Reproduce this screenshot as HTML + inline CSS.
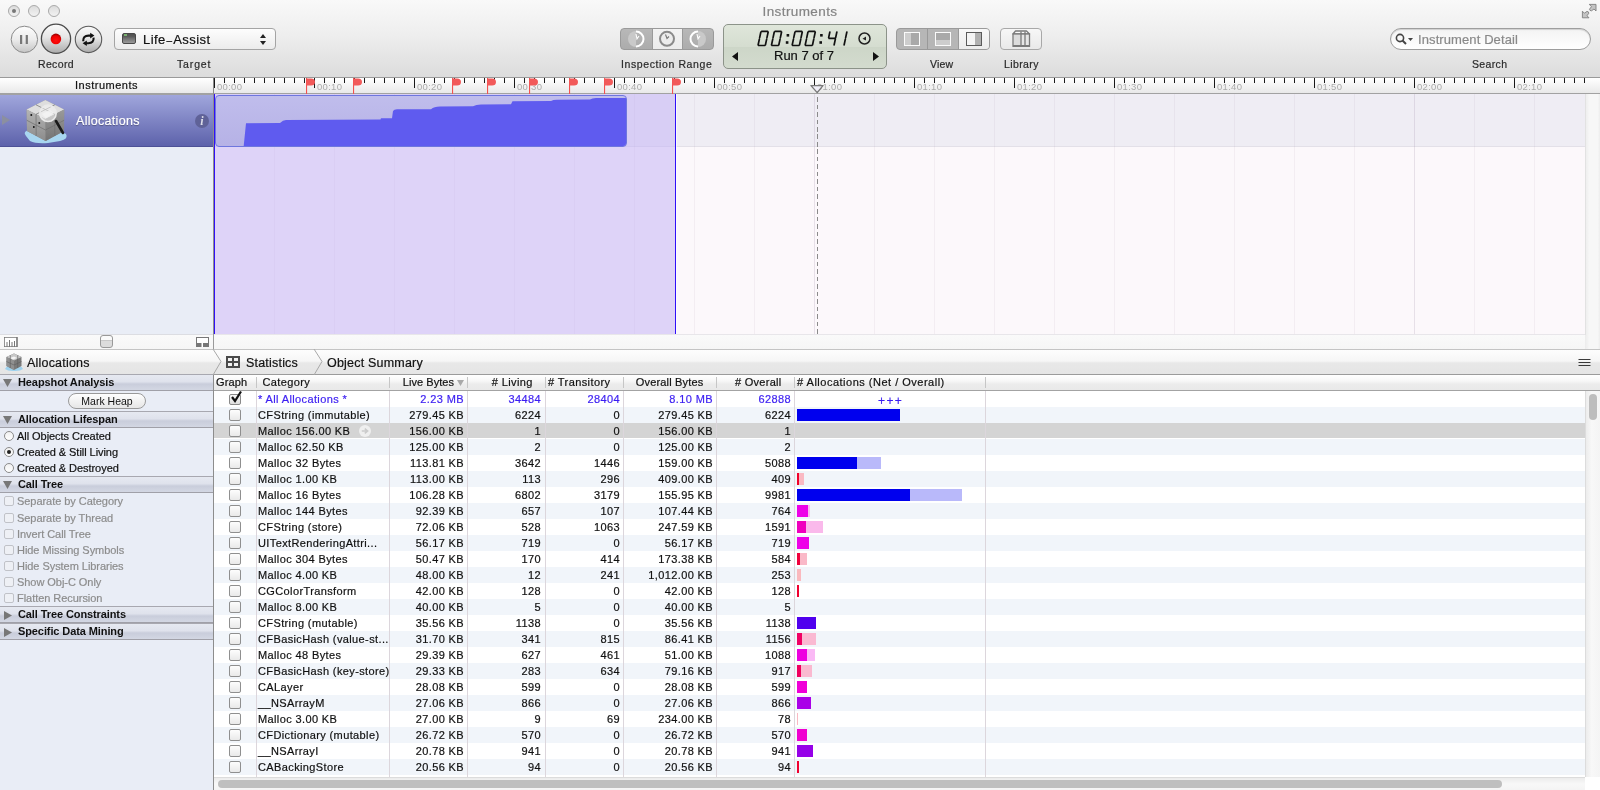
<!DOCTYPE html><html><head><meta charset="utf-8"><style>

*{box-sizing:border-box}
html,body{margin:0;padding:0}
body{width:1600px;height:790px;overflow:hidden;position:relative;font-family:"Liberation Sans",sans-serif;background:#e9edf6;color:#000}
.abs{position:absolute}
.lbl{position:absolute;font-size:10.5px;color:#2a2a2a;letter-spacing:0.35px;white-space:nowrap;line-height:12px;margin-top:1px;-webkit-text-stroke:0.2px currentColor}
.t{position:absolute;white-space:nowrap;-webkit-text-stroke:0.2px currentColor}

</style></head><body><div id="root" style="position:absolute;left:0;top:0;width:1600px;height:790px;overflow:hidden;will-change:transform">
<div class="abs" style="left:0;top:0;width:1600px;height:78px;background:linear-gradient(#f9f9f9 0%,#eeeeee 45%,#dcdcdc 100%);border-bottom:1px solid #9a9a9a"></div>
<div class="t" style="left:0;width:1600px;top:4px;text-align:center;font-size:13.5px;color:#858585;letter-spacing:0.4px">Instruments</div>
<div class="abs" style="left:8px;top:5px;width:12px;height:12px;border-radius:50%;border:1px solid #a9a9a9;background:linear-gradient(#dcdcdc,#f2f2f2)"></div>
<div class="abs" style="left:28px;top:5px;width:12px;height:12px;border-radius:50%;border:1px solid #a9a9a9;background:linear-gradient(#dcdcdc,#f2f2f2)"></div>
<div class="abs" style="left:48px;top:5px;width:12px;height:12px;border-radius:50%;border:1px solid #a9a9a9;background:linear-gradient(#dcdcdc,#f2f2f2)"></div>
<div class="abs" style="left:12px;top:9px;width:4px;height:4px;border-radius:50%;background:#777"></div>
<svg class="abs" style="left:0;top:20px" width="110" height="40" viewBox="0 20 110 40">
<defs>
<linearGradient id="bg1" x1="0" y1="0" x2="0" y2="1"><stop offset="0" stop-color="#fdfdfd"/><stop offset="0.5" stop-color="#ececec"/><stop offset="1" stop-color="#c4c4c4"/></linearGradient>
<linearGradient id="bg2" x1="0" y1="0" x2="0" y2="1"><stop offset="0" stop-color="#fafafa"/><stop offset="0.45" stop-color="#e6e6e6"/><stop offset="1" stop-color="#aaaaaa"/></linearGradient>
<radialGradient id="rd" cx="0.5" cy="0.65" r="0.6"><stop offset="0" stop-color="#ff1010"/><stop offset="0.7" stop-color="#f00000"/><stop offset="1" stop-color="#a00000"/></radialGradient>
</defs>
<circle cx="24.4" cy="39.4" r="13.2" fill="url(#bg1)" stroke="#8a8a8a" stroke-width="1"/>
<rect x="20" y="35" width="2.2" height="9" fill="#777"/><rect x="25.7" y="35" width="2.2" height="9" fill="#777"/>
<circle cx="56" cy="38.8" r="14.6" fill="url(#bg2)" stroke="#4a4a4a" stroke-width="1.3"/>
<circle cx="55.9" cy="38.9" r="5.3" fill="url(#rd)"/>
<circle cx="88.5" cy="39.4" r="13.2" fill="url(#bg2)" stroke="#5a5a5a" stroke-width="1.1"/>
<path d="M83.2 41.2 Q83 35.8 88.6 35.6 L91 35.6" fill="none" stroke="#111" stroke-width="2.1"/>
<path d="M90.2 32.8 L94.4 35.6 L90.2 38.4 Z" fill="#111"/>
<path d="M93.6 37.6 Q94 43 88.4 43.2 L86 43.2" fill="none" stroke="#111" stroke-width="2.1"/>
<path d="M86.8 40.4 L82.6 43.2 L86.8 46 Z" fill="#111"/>
</svg>
<div class="lbl" style="left:38px;top:57px">Record</div>
<div class="abs" style="left:114px;top:28px;width:162px;height:22px;border-radius:4px;border:1px solid #a4a4a4;background:linear-gradient(#fdfdfd,#ececec)"></div>
<div class="abs" style="left:122px;top:33px;width:14px;height:11px;border-radius:2px;border:1px solid #4a4a4a;background:linear-gradient(#505050 0,#5c5c5c 30%,#4e4e4e 32%,#6a6a6a 40%,#9a9a9a 100%)"></div>
<div class="abs" style="left:124px;top:34px;width:3px;height:2px;background:#7ab070"></div>
<div class="t" style="left:143px;top:32px;font-size:13px;letter-spacing:0.45px;color:#111">Life<span style="font-size:10px;margin-left:0.8px;margin-right:0.6px">–</span>Assist</div>
<svg class="abs" style="left:259px;top:33px" width="8" height="13" viewBox="0 0 8 13"><path d="M4 1 L7 5 L1 5 Z M4 12 L7 8 L1 8 Z" fill="#222"/></svg>
<div class="lbl" style="left:177px;top:57px;letter-spacing:0.85px">Target</div>
<div class="abs" style="left:620px;top:28px;width:94px;height:22px;border-radius:4px;border:1px solid #9a9a9a;background:linear-gradient(#b8b8b8,#acacac);overflow:hidden"><div class="abs" style="left:31px;top:0;width:31px;height:20px;background:linear-gradient(#f2f2f2,#ececec);border-left:1px solid #9a9a9a;border-right:1px solid #9a9a9a"></div></div>
<svg class="abs" style="left:620px;top:28px" width="94" height="22" viewBox="620 28 94 22">
<path d="M636 31 A8 8 0 0 0 636 47 Z" fill="#c9c9c9"/>
<path d="M636 31.5 A7.5 7.5 0 0 1 636 46.5" fill="none" stroke="#fff" stroke-width="2"/>
<path d="M636 34 L637 38.8 L639 36" fill="none" stroke="#fff" stroke-width="1.1"/>
<circle cx="667" cy="38.8" r="7" fill="#ececec" stroke="#8a8a8a" stroke-width="2"/>
<path d="M665.5 34.5 L667 38.5 L669 36.5" fill="none" stroke="#777" stroke-width="1.1"/>
<path d="M698 31 A8 8 0 0 1 698 47 Z" fill="#c9c9c9"/>
<path d="M698 31.5 A7.5 7.5 0 0 0 698 46.5" fill="none" stroke="#fff" stroke-width="2"/>
<path d="M697 34 L698 38.8 L700 36" fill="none" stroke="#fff" stroke-width="1.1"/>
</svg>
<div class="lbl" style="left:621px;top:57px;letter-spacing:0.6px">Inspection Range</div>
<div class="abs" style="left:723px;top:24px;width:164px;height:45px;border-radius:5px;border:1px solid #8c9389;background:linear-gradient(#dfe6da 0,#d5ddd0 50%,#cdd6c8 51%,#d3dbce 100%)"></div>
<svg class="abs" style="left:0;top:0" width="900" height="60" viewBox="0 0 900 60"><path d="M761.70 31.30 L767.60 31.30 M768.15 32.00 L766.96 37.70 M766.66 39.10 L765.46 44.80 M758.72 45.50 L764.62 45.50 M759.36 39.10 L758.16 44.80 M760.85 32.00 L759.66 37.70 M775.10 31.30 L781.00 31.30 M781.55 32.00 L780.36 37.70 M780.06 39.10 L778.86 44.80 M772.12 45.50 L778.02 45.50 M772.76 39.10 L771.56 44.80 M774.25 32.00 L773.06 37.70 M795.80 31.30 L801.70 31.30 M802.25 32.00 L801.06 37.70 M800.76 39.10 L799.56 44.80 M792.82 45.50 L798.72 45.50 M793.46 39.10 L792.26 44.80 M794.95 32.00 L793.76 37.70 M808.80 31.30 L814.70 31.30 M815.25 32.00 L814.06 37.70 M813.76 39.10 L812.56 44.80 M805.82 45.50 L811.72 45.50 M806.46 39.10 L805.26 44.80 M807.95 32.00 L806.76 37.70 M829.85 32.00 L828.66 37.70 M829.21 38.40 L834.81 38.40 M836.85 32.00 L835.66 37.70 M835.36 39.10 L834.16 44.80 M846.85 32.00 L845.66 37.70 M845.36 39.10 L844.16 44.80" stroke="#111" stroke-width="1.7" fill="none" stroke-linecap="round"/><rect x="786.6" y="34" width="2.6" height="2.6" fill="#111"/><rect x="785.8" y="41.2" width="2.6" height="2.6" fill="#111"/><rect x="820.1" y="34" width="2.6" height="2.6" fill="#111"/><rect x="819.4" y="41.2" width="2.6" height="2.6" fill="#111"/></svg>
<svg class="abs" style="left:857px;top:31px" width="15" height="15" viewBox="0 0 15 15"><circle cx="7.5" cy="7.5" r="5.5" fill="none" stroke="#222" stroke-width="1.5"/><path d="M9 5.5 L5.5 7.7 L9 9.5 Z" fill="#222"/></svg>
<div class="t" style="left:774px;top:48px;font-size:13px;color:#111">Run 7 of 7</div>
<svg class="abs" style="left:732px;top:52px" width="7" height="9"><path d="M6 0 L0 4.5 L6 9 Z" fill="#111"/></svg>
<svg class="abs" style="left:873px;top:52px" width="7" height="9"><path d="M0 0 L6 4.5 L0 9 Z" fill="#111"/></svg>
<div class="abs" style="left:896px;top:28px;width:94px;height:22px;border-radius:4px;border:1px solid #9a9a9a;background:#b6b6b6;overflow:hidden"><div class="abs" style="left:30px;top:0;width:1px;height:20px;background:#999"></div><div class="abs" style="left:61px;top:0;width:32px;height:20px;background:linear-gradient(#f8f8f8,#ececec);border-left:1px solid #9a9a9a"></div></div>
<div class="abs" style="left:904px;top:32px;width:16px;height:14px;border:1.5px solid #fafafa;background:linear-gradient(90deg,#cdcdcd 40%,#a9a9a9 40%)"></div>
<div class="abs" style="left:935px;top:32px;width:16px;height:14px;border:1.5px solid #fafafa;background:linear-gradient(#a9a9a9 60%,#cdcdcd 60%)"></div>
<div class="abs" style="left:966px;top:32px;width:16px;height:14px;border:1.5px solid #5a5a5a;background:linear-gradient(90deg,#f4f4f4 60%,#b0b0b0 60%)"></div>
<div class="lbl" style="left:930px;top:57px;letter-spacing:0.2px">View</div>
<div class="abs" style="left:1000px;top:28px;width:42px;height:22px;border-radius:4px;border:1px solid #a8a8a8;background:linear-gradient(#f7f7f7,#e9e9e9)"></div>
<svg class="abs" style="left:1008px;top:28px" width="26" height="22" viewBox="1008 28 26 22"><path d="M1013 34 L1015.5 31 L1026.5 31 L1029.5 34 Z" fill="#fafafa" stroke="#7a7a7a" stroke-width="1.3" stroke-linejoin="round"/><rect x="1013" y="34" width="16.5" height="12.3" fill="#e6e6e6" stroke="#7a7a7a" stroke-width="1.3"/><rect x="1014" y="35" width="7" height="10.5" fill="#dcdcdc"/><path d="M1021 31.5 L1021 46.3 M1025 31.5 L1025 46.3" stroke="#7a7a7a" stroke-width="1.3"/><rect x="1013" y="45" width="16.5" height="1.6" fill="#7a7a7a"/></svg>
<div class="lbl" style="left:1004px;top:57px;letter-spacing:0.4px">Library</div>
<div class="abs" style="left:1390px;top:28px;width:201px;height:22px;border-radius:11px;border:1px solid #9d9d9d;background:linear-gradient(#f3f3f3,#ffffff);box-shadow:inset 0 1px 1px rgba(0,0,0,.15)"></div>
<svg class="abs" style="left:1395px;top:33px" width="20" height="13" viewBox="0 0 20 13"><circle cx="5" cy="5" r="3.6" fill="none" stroke="#444" stroke-width="1.6"/><path d="M7.5 7.5 L11 11" stroke="#444" stroke-width="2"/><path d="M13 5 L18 5 L15.5 8 Z" fill="#444"/></svg>
<div class="t" style="left:1418px;top:32px;font-size:13px;color:#8a8a8a;letter-spacing:0.1px">Instrument Detail</div>
<div class="lbl" style="left:1472px;top:57px">Search</div>
<svg class="abs" style="left:1576px;top:0" width="24" height="24" viewBox="1576 0 24 24"><path d="M1589.2 4.4 L1596 4.4 L1596 11 L1594 9 L1591.5 10.8 Q1589.5 10.8 1589.5 9.2 L1591.5 6.6 Z" fill="#c4c4c4" stroke="#808080" stroke-width="0.9" stroke-linejoin="round"/><path d="M1582.4 11.2 L1582.4 17.8 L1589 17.8 L1587 15.8 L1588.8 13.2 Q1588.8 11.4 1587 11.4 L1584.4 13.2 Z" fill="#c4c4c4" stroke="#808080" stroke-width="0.9" stroke-linejoin="round"/></svg>
<div class="abs" style="left:0;top:78px;width:1600px;height:17px;background:linear-gradient(#ffffff 0,#f6f6f6 40%,#e9e9e9 100%);border-bottom:2px solid #a2a2a2"></div>
<div class="t" style="left:0;width:213px;top:79px;text-align:center;font-size:11px;letter-spacing:0.5px;color:#111">Instruments</div>
<div class="abs" style="left:213px;top:78px;width:1px;height:16px;background:#8a8a8a"></div>
<div class="abs" style="left:214px;top:78px;width:1px;height:10px;background:#1a1a1a"></div><div class="abs" style="left:224px;top:78px;width:1px;height:5px;background:#1a1a1a"></div><div class="abs" style="left:234px;top:78px;width:1px;height:5px;background:#1a1a1a"></div><div class="abs" style="left:244px;top:78px;width:1px;height:5px;background:#1a1a1a"></div><div class="abs" style="left:254px;top:78px;width:1px;height:5px;background:#1a1a1a"></div><div class="abs" style="left:264px;top:78px;width:1px;height:5px;background:#1a1a1a"></div><div class="abs" style="left:274px;top:78px;width:1px;height:5px;background:#1a1a1a"></div><div class="abs" style="left:284px;top:78px;width:1px;height:5px;background:#1a1a1a"></div><div class="abs" style="left:294px;top:78px;width:1px;height:5px;background:#1a1a1a"></div><div class="abs" style="left:304px;top:78px;width:1px;height:5px;background:#1a1a1a"></div><div class="abs" style="left:314px;top:78px;width:1px;height:10px;background:#1a1a1a"></div><div class="abs" style="left:324px;top:78px;width:1px;height:5px;background:#1a1a1a"></div><div class="abs" style="left:334px;top:78px;width:1px;height:5px;background:#1a1a1a"></div><div class="abs" style="left:344px;top:78px;width:1px;height:5px;background:#1a1a1a"></div><div class="abs" style="left:354px;top:78px;width:1px;height:5px;background:#1a1a1a"></div><div class="abs" style="left:364px;top:78px;width:1px;height:5px;background:#1a1a1a"></div><div class="abs" style="left:374px;top:78px;width:1px;height:5px;background:#1a1a1a"></div><div class="abs" style="left:384px;top:78px;width:1px;height:5px;background:#1a1a1a"></div><div class="abs" style="left:394px;top:78px;width:1px;height:5px;background:#1a1a1a"></div><div class="abs" style="left:404px;top:78px;width:1px;height:5px;background:#1a1a1a"></div><div class="abs" style="left:414px;top:78px;width:1px;height:10px;background:#1a1a1a"></div><div class="abs" style="left:424px;top:78px;width:1px;height:5px;background:#1a1a1a"></div><div class="abs" style="left:434px;top:78px;width:1px;height:5px;background:#1a1a1a"></div><div class="abs" style="left:444px;top:78px;width:1px;height:5px;background:#1a1a1a"></div><div class="abs" style="left:454px;top:78px;width:1px;height:5px;background:#1a1a1a"></div><div class="abs" style="left:464px;top:78px;width:1px;height:5px;background:#1a1a1a"></div><div class="abs" style="left:474px;top:78px;width:1px;height:5px;background:#1a1a1a"></div><div class="abs" style="left:484px;top:78px;width:1px;height:5px;background:#1a1a1a"></div><div class="abs" style="left:494px;top:78px;width:1px;height:5px;background:#1a1a1a"></div><div class="abs" style="left:504px;top:78px;width:1px;height:5px;background:#1a1a1a"></div><div class="abs" style="left:514px;top:78px;width:1px;height:10px;background:#1a1a1a"></div><div class="abs" style="left:524px;top:78px;width:1px;height:5px;background:#1a1a1a"></div><div class="abs" style="left:534px;top:78px;width:1px;height:5px;background:#1a1a1a"></div><div class="abs" style="left:544px;top:78px;width:1px;height:5px;background:#1a1a1a"></div><div class="abs" style="left:554px;top:78px;width:1px;height:5px;background:#1a1a1a"></div><div class="abs" style="left:564px;top:78px;width:1px;height:5px;background:#1a1a1a"></div><div class="abs" style="left:574px;top:78px;width:1px;height:5px;background:#1a1a1a"></div><div class="abs" style="left:584px;top:78px;width:1px;height:5px;background:#1a1a1a"></div><div class="abs" style="left:594px;top:78px;width:1px;height:5px;background:#1a1a1a"></div><div class="abs" style="left:604px;top:78px;width:1px;height:5px;background:#1a1a1a"></div><div class="abs" style="left:614px;top:78px;width:1px;height:10px;background:#1a1a1a"></div><div class="abs" style="left:624px;top:78px;width:1px;height:5px;background:#1a1a1a"></div><div class="abs" style="left:634px;top:78px;width:1px;height:5px;background:#1a1a1a"></div><div class="abs" style="left:644px;top:78px;width:1px;height:5px;background:#1a1a1a"></div><div class="abs" style="left:654px;top:78px;width:1px;height:5px;background:#1a1a1a"></div><div class="abs" style="left:664px;top:78px;width:1px;height:5px;background:#1a1a1a"></div><div class="abs" style="left:674px;top:78px;width:1px;height:5px;background:#1a1a1a"></div><div class="abs" style="left:684px;top:78px;width:1px;height:5px;background:#1a1a1a"></div><div class="abs" style="left:694px;top:78px;width:1px;height:5px;background:#1a1a1a"></div><div class="abs" style="left:704px;top:78px;width:1px;height:5px;background:#1a1a1a"></div><div class="abs" style="left:714px;top:78px;width:1px;height:10px;background:#1a1a1a"></div><div class="abs" style="left:724px;top:78px;width:1px;height:5px;background:#1a1a1a"></div><div class="abs" style="left:734px;top:78px;width:1px;height:5px;background:#1a1a1a"></div><div class="abs" style="left:744px;top:78px;width:1px;height:5px;background:#1a1a1a"></div><div class="abs" style="left:754px;top:78px;width:1px;height:5px;background:#1a1a1a"></div><div class="abs" style="left:764px;top:78px;width:1px;height:5px;background:#1a1a1a"></div><div class="abs" style="left:774px;top:78px;width:1px;height:5px;background:#1a1a1a"></div><div class="abs" style="left:784px;top:78px;width:1px;height:5px;background:#1a1a1a"></div><div class="abs" style="left:794px;top:78px;width:1px;height:5px;background:#1a1a1a"></div><div class="abs" style="left:804px;top:78px;width:1px;height:5px;background:#1a1a1a"></div><div class="abs" style="left:814px;top:78px;width:1px;height:10px;background:#1a1a1a"></div><div class="abs" style="left:824px;top:78px;width:1px;height:5px;background:#1a1a1a"></div><div class="abs" style="left:834px;top:78px;width:1px;height:5px;background:#1a1a1a"></div><div class="abs" style="left:844px;top:78px;width:1px;height:5px;background:#1a1a1a"></div><div class="abs" style="left:854px;top:78px;width:1px;height:5px;background:#1a1a1a"></div><div class="abs" style="left:864px;top:78px;width:1px;height:5px;background:#1a1a1a"></div><div class="abs" style="left:874px;top:78px;width:1px;height:5px;background:#1a1a1a"></div><div class="abs" style="left:884px;top:78px;width:1px;height:5px;background:#1a1a1a"></div><div class="abs" style="left:894px;top:78px;width:1px;height:5px;background:#1a1a1a"></div><div class="abs" style="left:904px;top:78px;width:1px;height:5px;background:#1a1a1a"></div><div class="abs" style="left:914px;top:78px;width:1px;height:10px;background:#1a1a1a"></div><div class="abs" style="left:924px;top:78px;width:1px;height:5px;background:#1a1a1a"></div><div class="abs" style="left:934px;top:78px;width:1px;height:5px;background:#1a1a1a"></div><div class="abs" style="left:944px;top:78px;width:1px;height:5px;background:#1a1a1a"></div><div class="abs" style="left:954px;top:78px;width:1px;height:5px;background:#1a1a1a"></div><div class="abs" style="left:964px;top:78px;width:1px;height:5px;background:#1a1a1a"></div><div class="abs" style="left:974px;top:78px;width:1px;height:5px;background:#1a1a1a"></div><div class="abs" style="left:984px;top:78px;width:1px;height:5px;background:#1a1a1a"></div><div class="abs" style="left:994px;top:78px;width:1px;height:5px;background:#1a1a1a"></div><div class="abs" style="left:1004px;top:78px;width:1px;height:5px;background:#1a1a1a"></div><div class="abs" style="left:1014px;top:78px;width:1px;height:10px;background:#1a1a1a"></div><div class="abs" style="left:1024px;top:78px;width:1px;height:5px;background:#1a1a1a"></div><div class="abs" style="left:1034px;top:78px;width:1px;height:5px;background:#1a1a1a"></div><div class="abs" style="left:1044px;top:78px;width:1px;height:5px;background:#1a1a1a"></div><div class="abs" style="left:1054px;top:78px;width:1px;height:5px;background:#1a1a1a"></div><div class="abs" style="left:1064px;top:78px;width:1px;height:5px;background:#1a1a1a"></div><div class="abs" style="left:1074px;top:78px;width:1px;height:5px;background:#1a1a1a"></div><div class="abs" style="left:1084px;top:78px;width:1px;height:5px;background:#1a1a1a"></div><div class="abs" style="left:1094px;top:78px;width:1px;height:5px;background:#1a1a1a"></div><div class="abs" style="left:1104px;top:78px;width:1px;height:5px;background:#1a1a1a"></div><div class="abs" style="left:1114px;top:78px;width:1px;height:10px;background:#1a1a1a"></div><div class="abs" style="left:1124px;top:78px;width:1px;height:5px;background:#1a1a1a"></div><div class="abs" style="left:1134px;top:78px;width:1px;height:5px;background:#1a1a1a"></div><div class="abs" style="left:1144px;top:78px;width:1px;height:5px;background:#1a1a1a"></div><div class="abs" style="left:1154px;top:78px;width:1px;height:5px;background:#1a1a1a"></div><div class="abs" style="left:1164px;top:78px;width:1px;height:5px;background:#1a1a1a"></div><div class="abs" style="left:1174px;top:78px;width:1px;height:5px;background:#1a1a1a"></div><div class="abs" style="left:1184px;top:78px;width:1px;height:5px;background:#1a1a1a"></div><div class="abs" style="left:1194px;top:78px;width:1px;height:5px;background:#1a1a1a"></div><div class="abs" style="left:1204px;top:78px;width:1px;height:5px;background:#1a1a1a"></div><div class="abs" style="left:1214px;top:78px;width:1px;height:10px;background:#1a1a1a"></div><div class="abs" style="left:1224px;top:78px;width:1px;height:5px;background:#1a1a1a"></div><div class="abs" style="left:1234px;top:78px;width:1px;height:5px;background:#1a1a1a"></div><div class="abs" style="left:1244px;top:78px;width:1px;height:5px;background:#1a1a1a"></div><div class="abs" style="left:1254px;top:78px;width:1px;height:5px;background:#1a1a1a"></div><div class="abs" style="left:1264px;top:78px;width:1px;height:5px;background:#1a1a1a"></div><div class="abs" style="left:1274px;top:78px;width:1px;height:5px;background:#1a1a1a"></div><div class="abs" style="left:1284px;top:78px;width:1px;height:5px;background:#1a1a1a"></div><div class="abs" style="left:1294px;top:78px;width:1px;height:5px;background:#1a1a1a"></div><div class="abs" style="left:1304px;top:78px;width:1px;height:5px;background:#1a1a1a"></div><div class="abs" style="left:1314px;top:78px;width:1px;height:10px;background:#1a1a1a"></div><div class="abs" style="left:1324px;top:78px;width:1px;height:5px;background:#1a1a1a"></div><div class="abs" style="left:1334px;top:78px;width:1px;height:5px;background:#1a1a1a"></div><div class="abs" style="left:1344px;top:78px;width:1px;height:5px;background:#1a1a1a"></div><div class="abs" style="left:1354px;top:78px;width:1px;height:5px;background:#1a1a1a"></div><div class="abs" style="left:1364px;top:78px;width:1px;height:5px;background:#1a1a1a"></div><div class="abs" style="left:1374px;top:78px;width:1px;height:5px;background:#1a1a1a"></div><div class="abs" style="left:1384px;top:78px;width:1px;height:5px;background:#1a1a1a"></div><div class="abs" style="left:1394px;top:78px;width:1px;height:5px;background:#1a1a1a"></div><div class="abs" style="left:1404px;top:78px;width:1px;height:5px;background:#1a1a1a"></div><div class="abs" style="left:1414px;top:78px;width:1px;height:10px;background:#1a1a1a"></div><div class="abs" style="left:1424px;top:78px;width:1px;height:5px;background:#1a1a1a"></div><div class="abs" style="left:1434px;top:78px;width:1px;height:5px;background:#1a1a1a"></div><div class="abs" style="left:1444px;top:78px;width:1px;height:5px;background:#1a1a1a"></div><div class="abs" style="left:1454px;top:78px;width:1px;height:5px;background:#1a1a1a"></div><div class="abs" style="left:1464px;top:78px;width:1px;height:5px;background:#1a1a1a"></div><div class="abs" style="left:1474px;top:78px;width:1px;height:5px;background:#1a1a1a"></div><div class="abs" style="left:1484px;top:78px;width:1px;height:5px;background:#1a1a1a"></div><div class="abs" style="left:1494px;top:78px;width:1px;height:5px;background:#1a1a1a"></div><div class="abs" style="left:1504px;top:78px;width:1px;height:5px;background:#1a1a1a"></div><div class="abs" style="left:1514px;top:78px;width:1px;height:10px;background:#1a1a1a"></div><div class="abs" style="left:1524px;top:78px;width:1px;height:5px;background:#1a1a1a"></div><div class="abs" style="left:1534px;top:78px;width:1px;height:5px;background:#1a1a1a"></div><div class="abs" style="left:1544px;top:78px;width:1px;height:5px;background:#1a1a1a"></div><div class="abs" style="left:1554px;top:78px;width:1px;height:5px;background:#1a1a1a"></div><div class="abs" style="left:1564px;top:78px;width:1px;height:5px;background:#1a1a1a"></div><div class="abs" style="left:1574px;top:78px;width:1px;height:5px;background:#1a1a1a"></div><div class="abs" style="left:1584px;top:78px;width:1px;height:5px;background:#1a1a1a"></div>
<div class="t" style="left:217px;top:82px;font-size:9.5px;letter-spacing:0.3px;color:#acacac;line-height:10px;-webkit-text-stroke:0">00:00</div>
<div class="t" style="left:317px;top:82px;font-size:9.5px;letter-spacing:0.3px;color:#acacac;line-height:10px;-webkit-text-stroke:0">00:10</div>
<div class="t" style="left:417px;top:82px;font-size:9.5px;letter-spacing:0.3px;color:#acacac;line-height:10px;-webkit-text-stroke:0">00:20</div>
<div class="t" style="left:517px;top:82px;font-size:9.5px;letter-spacing:0.3px;color:#acacac;line-height:10px;-webkit-text-stroke:0">00:30</div>
<div class="t" style="left:617px;top:82px;font-size:9.5px;letter-spacing:0.3px;color:#acacac;line-height:10px;-webkit-text-stroke:0">00:40</div>
<div class="t" style="left:717px;top:82px;font-size:9.5px;letter-spacing:0.3px;color:#acacac;line-height:10px;-webkit-text-stroke:0">00:50</div>
<div class="t" style="left:817px;top:82px;font-size:9.5px;letter-spacing:0.3px;color:#acacac;line-height:10px;-webkit-text-stroke:0">01:00</div>
<div class="t" style="left:917px;top:82px;font-size:9.5px;letter-spacing:0.3px;color:#acacac;line-height:10px;-webkit-text-stroke:0">01:10</div>
<div class="t" style="left:1017px;top:82px;font-size:9.5px;letter-spacing:0.3px;color:#acacac;line-height:10px;-webkit-text-stroke:0">01:20</div>
<div class="t" style="left:1117px;top:82px;font-size:9.5px;letter-spacing:0.3px;color:#acacac;line-height:10px;-webkit-text-stroke:0">01:30</div>
<div class="t" style="left:1217px;top:82px;font-size:9.5px;letter-spacing:0.3px;color:#acacac;line-height:10px;-webkit-text-stroke:0">01:40</div>
<div class="t" style="left:1317px;top:82px;font-size:9.5px;letter-spacing:0.3px;color:#acacac;line-height:10px;-webkit-text-stroke:0">01:50</div>
<div class="t" style="left:1417px;top:82px;font-size:9.5px;letter-spacing:0.3px;color:#acacac;line-height:10px;-webkit-text-stroke:0">02:00</div>
<div class="t" style="left:1517px;top:82px;font-size:9.5px;letter-spacing:0.3px;color:#acacac;line-height:10px;-webkit-text-stroke:0">02:10</div>
<div class="abs" style="left:0;top:95px;width:213px;height:52px;background:linear-gradient(#a0a6dc,#5d62ab);border-bottom:1px solid #4d5196"></div>
<svg class="abs" style="left:2px;top:115px" width="8" height="10"><path d="M0 0 L8 5 L0 10 Z" fill="#8b8fa0"/></svg>
<div class="t" style="left:76px;top:114px;font-size:12.5px;color:#fff;letter-spacing:0.3px;text-shadow:0 1px 1px rgba(0,0,0,.35)">Allocations</div>
<div class="abs" style="left:195px;top:114px;width:14px;height:14px;border-radius:50%;background:#5f6298;color:#dcdde8;font:italic bold 12px/15px 'Liberation Serif',serif;text-align:center">i</div>
<svg class="abs" style="left:20px;top:96px" width="52" height="50" viewBox="20 96 52 50">
<defs><linearGradient id="lf" x1="0" y1="0" x2="0" y2="1"><stop offset="0" stop-color="#b4b4b4"/><stop offset="1" stop-color="#8c8c8c"/></linearGradient>
<linearGradient id="rf" x1="0" y1="0" x2="0" y2="1"><stop offset="0" stop-color="#9a9a9a"/><stop offset="1" stop-color="#747474"/></linearGradient></defs>
<path d="M26 136 Q22 131 30 130 L40 134 L50 133 Q60 129 66 134 Q69 139 60 141 L48 143 Q36 144 30 141 Z" fill="#a8d6f0"/>
<path d="M45.3 100 L64.2 109.5 L64 131 L45.6 141 L27 131 L26.6 109.5 Z" fill="#8a8a8a"/>
<path d="M45.3 100 L64.2 109.5 L45.5 119 L26.6 109.5 Z" fill="#dedede"/>
<path d="M26.6 109.5 L45.5 119 L45.6 141 L27 131 Z" fill="url(#lf)"/>
<path d="M45.5 119 L64.2 109.5 L64 131 L45.6 141 Z" fill="url(#rf)"/>
<path d="M36 104.8 L54.8 114.3 M54.8 104.8 L36 114.3 M26.8 120.3 L45.5 130 L64.1 120.3 M36 114.3 L36.2 136 M54.8 114.3 L54.8 136" stroke="#6f6f6f" stroke-width="0.7" fill="none"/>
<rect x="30.5" y="114" width="1.6" height="2" fill="#222"/><rect x="38.5" y="122" width="1.6" height="2" fill="#222"/><rect x="33" y="126" width="1.6" height="2" fill="#222"/>
<path d="M56 121 L63 133" stroke="#1a1a1a" stroke-width="2.6" stroke-linecap="round"/>
<circle cx="48" cy="113.3" r="8.2" fill="rgba(245,245,245,.55)" stroke="#eaeaea" stroke-width="1.6"/>
<path d="M42 114 L50 110 L54 113 L46 118 Z" fill="#f4f4f4" opacity=".8"/>
</svg>
<div class="abs" style="left:0;top:147px;width:213px;height:187px;background:#e9edf6"></div>
<div class="abs" style="left:213px;top:94px;width:1px;height:255px;background:#8d8d8d"></div>
<div class="abs" style="left:214px;top:94px;width:1371px;height:53px;background:#efedf4;border-bottom:1px solid #e3e0e8"></div>
<div class="abs" style="left:214px;top:147px;width:1371px;height:187px;background:#fcf8fb"></div>
<div class="abs" style="left:274px;top:94px;width:1px;height:240px;background:rgba(150,130,160,.09)"></div><div class="abs" style="left:334px;top:94px;width:1px;height:240px;background:rgba(150,130,160,.09)"></div><div class="abs" style="left:394px;top:94px;width:1px;height:240px;background:rgba(150,130,160,.09)"></div><div class="abs" style="left:454px;top:94px;width:1px;height:240px;background:rgba(150,130,160,.09)"></div><div class="abs" style="left:514px;top:94px;width:1px;height:240px;background:rgba(150,130,160,.09)"></div><div class="abs" style="left:574px;top:94px;width:1px;height:240px;background:rgba(150,130,160,.09)"></div><div class="abs" style="left:634px;top:94px;width:1px;height:240px;background:rgba(150,130,160,.09)"></div><div class="abs" style="left:694px;top:94px;width:1px;height:240px;background:rgba(150,130,160,.09)"></div><div class="abs" style="left:754px;top:94px;width:1px;height:240px;background:rgba(150,130,160,.09)"></div><div class="abs" style="left:814px;top:94px;width:1px;height:240px;background:rgba(150,130,160,.2)"></div><div class="abs" style="left:874px;top:94px;width:1px;height:240px;background:rgba(150,130,160,.09)"></div><div class="abs" style="left:934px;top:94px;width:1px;height:240px;background:rgba(150,130,160,.09)"></div><div class="abs" style="left:994px;top:94px;width:1px;height:240px;background:rgba(150,130,160,.09)"></div><div class="abs" style="left:1054px;top:94px;width:1px;height:240px;background:rgba(150,130,160,.09)"></div><div class="abs" style="left:1114px;top:94px;width:1px;height:240px;background:rgba(150,130,160,.09)"></div><div class="abs" style="left:1174px;top:94px;width:1px;height:240px;background:rgba(150,130,160,.09)"></div><div class="abs" style="left:1234px;top:94px;width:1px;height:240px;background:rgba(150,130,160,.09)"></div><div class="abs" style="left:1294px;top:94px;width:1px;height:240px;background:rgba(150,130,160,.09)"></div><div class="abs" style="left:1354px;top:94px;width:1px;height:240px;background:rgba(150,130,160,.09)"></div><div class="abs" style="left:1414px;top:94px;width:1px;height:240px;background:rgba(150,130,160,.2)"></div><div class="abs" style="left:1474px;top:94px;width:1px;height:240px;background:rgba(150,130,160,.09)"></div><div class="abs" style="left:1534px;top:94px;width:1px;height:240px;background:rgba(150,130,160,.09)"></div>
<div class="abs" style="left:214px;top:94px;width:461px;height:240px;background:rgba(196,180,246,.55)"></div>
<div class="abs" style="left:214px;top:94px;width:1px;height:240px;background:#3010f8"></div>
<div class="abs" style="left:675px;top:94px;width:1px;height:240px;background:#3010f8"></div><div class="abs" style="left:676px;top:94px;width:1px;height:240px;background:rgba(255,255,255,.7)"></div>
<div class="abs" style="left:215px;top:95px;width:412px;height:52px;border-radius:4px;border:1px solid #6e76de;background:linear-gradient(#c0bdec,#b6b2e6)"></div>
<svg class="abs" style="left:214px;top:94px" width="414" height="54" viewBox="214 94 414 54">
<defs><clipPath id="gbox"><rect x="216" y="96" width="410" height="50" rx="3"/></clipPath></defs>
<path clip-path="url(#gbox)" d="M243.7 146 L246 123.3 L280 123 Q283 120 286 120 L380.5 119.6 L381 118.2 L392 118.2 L393 111 Q394 109.3 397 109.3 L431 109.2 Q434 106.6 440 106.6 L473 106.3 Q476 104.4 481 104.4 L511 104.3 L512.5 101.3 L551 101 Q553 99.7 557 99.7 L590 99.5 Q592 98 596 98 L626 98 L626 146 Z" fill="#5f5bef"/>
</svg>
<svg class="abs" style="left:306px;top:78px" width="10" height="16" viewBox="0 0 10 16"><path d="M0.5 0 L0.5 16" stroke="#f25252" stroke-width="1.2"/><path d="M0.5 0.5 L5 0.5 Q9 0.5 9 4 Q9 7.5 5 7.5 L0.5 7.5 Z" fill="#f25a5a"/></svg><svg class="abs" style="left:353px;top:78px" width="10" height="16" viewBox="0 0 10 16"><path d="M0.5 0 L0.5 16" stroke="#f25252" stroke-width="1.2"/><path d="M0.5 0.5 L5 0.5 Q9 0.5 9 4 Q9 7.5 5 7.5 L0.5 7.5 Z" fill="#f25a5a"/></svg><svg class="abs" style="left:452px;top:78px" width="10" height="16" viewBox="0 0 10 16"><path d="M0.5 0 L0.5 16" stroke="#f25252" stroke-width="1.2"/><path d="M0.5 0.5 L5 0.5 Q9 0.5 9 4 Q9 7.5 5 7.5 L0.5 7.5 Z" fill="#f25a5a"/></svg><svg class="abs" style="left:487px;top:78px" width="10" height="16" viewBox="0 0 10 16"><path d="M0.5 0 L0.5 16" stroke="#f25252" stroke-width="1.2"/><path d="M0.5 0.5 L5 0.5 Q9 0.5 9 4 Q9 7.5 5 7.5 L0.5 7.5 Z" fill="#f25a5a"/></svg><svg class="abs" style="left:529px;top:78px" width="10" height="16" viewBox="0 0 10 16"><path d="M0.5 0 L0.5 16" stroke="#f25252" stroke-width="1.2"/><path d="M0.5 0.5 L5 0.5 Q9 0.5 9 4 Q9 7.5 5 7.5 L0.5 7.5 Z" fill="#f25a5a"/></svg><svg class="abs" style="left:569px;top:78px" width="10" height="16" viewBox="0 0 10 16"><path d="M0.5 0 L0.5 16" stroke="#f25252" stroke-width="1.2"/><path d="M0.5 0.5 L5 0.5 Q9 0.5 9 4 Q9 7.5 5 7.5 L0.5 7.5 Z" fill="#f25a5a"/></svg><svg class="abs" style="left:604px;top:78px" width="10" height="16" viewBox="0 0 10 16"><path d="M0.5 0 L0.5 16" stroke="#f25252" stroke-width="1.2"/><path d="M0.5 0.5 L5 0.5 Q9 0.5 9 4 Q9 7.5 5 7.5 L0.5 7.5 Z" fill="#f25a5a"/></svg><svg class="abs" style="left:672px;top:78px" width="10" height="16" viewBox="0 0 10 16"><path d="M0.5 0 L0.5 16" stroke="#f25252" stroke-width="1.2"/><path d="M0.5 0.5 L5 0.5 Q9 0.5 9 4 Q9 7.5 5 7.5 L0.5 7.5 Z" fill="#f25a5a"/></svg>
<div class="abs" style="left:817px;top:97px;width:1px;height:237px;background:repeating-linear-gradient(#8a8a8a 0 4.5px,transparent 4.5px 7.5px)"></div>
<svg class="abs" style="left:809px;top:84px" width="16" height="11" viewBox="809 84 16 11"><path d="M811 85.6 L823 85.6 L817.2 92.6 Z" fill="#f1eff8" stroke="#7a7a7a" stroke-width="1.4" stroke-linejoin="round"/></svg>
<div class="abs" style="left:0;top:334px;width:1600px;height:15px;background:linear-gradient(#fafafa,#f6f6f6)"></div><div class="abs" style="left:0;top:334px;width:213px;height:1px;background:#dcdde2"></div>
<div class="abs" style="left:1585px;top:94px;width:15px;height:255px;background:linear-gradient(90deg,#ececec,#f7f7f7 30%,#f7f7f7 85%,#ededed)"></div><div class="abs" style="left:214px;top:334px;width:1372px;height:1px;background:#e8e6ea"></div><div class="abs" style="left:1585px;top:94px;width:1px;height:241px;background:#e2e2e2"></div>
<svg class="abs" style="left:4px;top:337px" width="14" height="10" viewBox="0 0 14 10"><path d="M0 10 L0 0 L13 0 L13 10 L0 10" fill="#fff" stroke="#777" stroke-width="1.6"/><rect x="2.5" y="5" width="1" height="5" fill="#777"/><rect x="5" y="3" width="1" height="7" fill="#777"/><rect x="7.5" y="5" width="1" height="5" fill="#777"/><rect x="10" y="4" width="1" height="6" fill="#777"/></svg>
<div class="abs" style="left:100px;top:335px;width:13px;height:13px;border-radius:3px;border:1px solid #999;background:linear-gradient(#fafafa 40%,#c8c8c8 40%,#c8c8c8 48%,#dcdcdc 48%)"></div>
<svg class="abs" style="left:196px;top:337px" width="13" height="10" viewBox="0 0 13 10"><rect x="0" y="0" width="13" height="10" fill="#777"/><rect x="1" y="1" width="11" height="5" fill="#fff"/><rect x="5.5" y="6" width="1.5" height="4" fill="#fff"/></svg>
<div class="abs" style="left:213px;top:334px;width:1px;height:15px;background:#9a9a9a"></div>
<div class="abs" style="left:0;top:349px;width:1600px;height:26px;background:linear-gradient(#fdfdfd 0,#f6f6f6 46%,#e8e8e8 54%,#e5e5e5 100%);border-top:1px solid #c4c4c4;border-bottom:1px solid #9b9b9b"></div>
<svg class="abs" style="left:4px;top:352px" width="20" height="20" viewBox="0 0 20 20">
<path d="M1 17 Q3 13 6 15 L10 17 L14 15 Q17 13 19 17 Q16 19.5 10 19 Q4 19.5 1 17 Z" fill="#9fd2ee"/>
<path d="M10 1.5 L17.5 5 L17.5 14 L10 18 L2.5 14 L2.5 5 Z" fill="#7a7a7a"/>
<path d="M10 1.5 L17.5 5 L10 8.5 L2.5 5 Z" fill="#c8c8c8"/>
<path d="M2.5 5 L10 8.5 L10 18 L2.5 14 Z" fill="#909090"/>
<path d="M6 6 L10 4.5 L13 6 L9 7.6 Z" fill="#f4f4f4"/>
<path d="M6.3 3.2 L6.3 16 M13.7 3.2 L13.7 16 M2.5 9.5 L10 13 L17.5 9.5" stroke="#5e5e5e" stroke-width="0.6" fill="none"/>
</svg>
<div class="t" style="left:27px;top:356px;font-size:12.5px;color:#111;letter-spacing:0.2px">Allocations</div>
<svg class="abs" style="left:212px;top:349px" width="12" height="26" viewBox="0 0 12 26"><path d="M1 0 L9 12.5 L1 26" fill="none" stroke="#a8a8a8" stroke-width="1"/></svg>
<svg class="abs" style="left:313px;top:349px" width="12" height="26" viewBox="0 0 12 26"><path d="M1 0 L9 12.5 L1 26" fill="none" stroke="#a8a8a8" stroke-width="1"/></svg>
<svg class="abs" style="left:226px;top:356px" width="14" height="12" viewBox="0 0 14 12"><rect x="0" y="0" width="14" height="12" fill="#4a4a4a"/><rect x="2" y="2" width="4" height="3" fill="#f2f2f2"/><rect x="8" y="2" width="4" height="3" fill="#f2f2f2"/><rect x="2" y="7" width="4" height="3" fill="#f2f2f2"/><rect x="8" y="7" width="4" height="3" fill="#f2f2f2"/></svg>
<div class="t" style="left:246px;top:356px;font-size:12.5px;color:#111;letter-spacing:0.2px">Statistics</div>
<div class="t" style="left:327px;top:356px;font-size:12.5px;color:#111;letter-spacing:0.2px">Object Summary</div>
<svg class="abs" style="left:1578px;top:358px" width="13" height="10" viewBox="0 0 13 10"><path d="M0.5 1.5 L12.5 1.5 M0.5 4.5 L12.5 4.5 M0.5 7.5 L12.5 7.5" stroke="#3a3a3a" stroke-width="1"/></svg>
<div class="abs" style="left:0;top:375px;width:213px;height:415px;background:#e9edf6"></div>
<div class="abs" style="left:213px;top:375px;width:1px;height:415px;background:#8d8d8d"></div>
<div class="abs" style="left:0;top:374px;width:213px;height:17px;background:linear-gradient(#e6e9f1 0,#dfe2ec 45%,#c9cddb 60%,#d3d7e3 100%);border-top:1px solid #a8a8b0;border-bottom:1px solid #a0a0a8"></div>
<svg class="abs" style="left:3px;top:379px" width="10" height="10" viewBox="0 0 10 10"><path d="M0 0 L9 0 L4.5 8 Z" fill="#777"/></svg>
<div class="t" style="left:18px;top:376px;font-size:11px;font-weight:bold;color:#111;letter-spacing:-0.1px;-webkit-text-stroke:0">Heapshot Analysis</div>
<div class="abs" style="left:68px;top:393px;width:78px;height:16px;border-radius:8px;border:1px solid #999;background:linear-gradient(#fefefe,#e6e6e6);text-align:center;font-size:10.5px;line-height:14px;color:#111">Mark Heap</div>
<div class="abs" style="left:0;top:411px;width:213px;height:17px;background:linear-gradient(#e6e9f1 0,#dfe2ec 45%,#c9cddb 60%,#d3d7e3 100%);border-top:1px solid #a8a8b0;border-bottom:1px solid #a0a0a8"></div>
<svg class="abs" style="left:3px;top:416px" width="10" height="10" viewBox="0 0 10 10"><path d="M0 0 L9 0 L4.5 8 Z" fill="#777"/></svg>
<div class="t" style="left:18px;top:413px;font-size:11px;font-weight:bold;color:#111;letter-spacing:-0.1px;-webkit-text-stroke:0">Allocation Lifespan</div>
<div class="abs" style="left:4px;top:431px;width:10px;height:10px;border-radius:50%;border:1px solid #8a8a8a;background:linear-gradient(#f0f0f0,#ffffff)"></div>
<div class="t" style="left:17px;top:430px;font-size:11px;color:#111;letter-spacing:-0.05px">All Objects Created</div>
<div class="abs" style="left:4px;top:447px;width:10px;height:10px;border-radius:50%;border:1px solid #8a8a8a;background:linear-gradient(#f0f0f0,#ffffff)"><div class="abs" style="left:2px;top:2px;width:4px;height:4px;border-radius:50%;background:#222"></div></div>
<div class="t" style="left:17px;top:446px;font-size:11px;color:#111;letter-spacing:-0.05px">Created &amp; Still Living</div>
<div class="abs" style="left:4px;top:463px;width:10px;height:10px;border-radius:50%;border:1px solid #8a8a8a;background:linear-gradient(#f0f0f0,#ffffff)"></div>
<div class="t" style="left:17px;top:462px;font-size:11px;color:#111;letter-spacing:-0.05px">Created &amp; Destroyed</div>
<div class="abs" style="left:0;top:476px;width:213px;height:17px;background:linear-gradient(#e6e9f1 0,#dfe2ec 45%,#c9cddb 60%,#d3d7e3 100%);border-top:1px solid #a8a8b0;border-bottom:1px solid #a0a0a8"></div>
<svg class="abs" style="left:3px;top:481px" width="10" height="10" viewBox="0 0 10 10"><path d="M0 0 L9 0 L4.5 8 Z" fill="#777"/></svg>
<div class="t" style="left:18px;top:478px;font-size:11px;font-weight:bold;color:#111;letter-spacing:-0.1px;-webkit-text-stroke:0">Call Tree</div>
<div class="abs" style="left:4px;top:496px;width:10px;height:10px;border-radius:2px;border:1px solid #c0c2c8;background:#eef0f5"></div>
<div class="t" style="left:17px;top:495px;font-size:11px;color:#8c8c8c;letter-spacing:-0.05px">Separate by Category</div>
<div class="abs" style="left:4px;top:513px;width:10px;height:10px;border-radius:2px;border:1px solid #c0c2c8;background:#eef0f5"></div>
<div class="t" style="left:17px;top:512px;font-size:11px;color:#8c8c8c;letter-spacing:-0.05px">Separate by Thread</div>
<div class="abs" style="left:4px;top:529px;width:10px;height:10px;border-radius:2px;border:1px solid #c0c2c8;background:#eef0f5"></div>
<div class="t" style="left:17px;top:528px;font-size:11px;color:#8c8c8c;letter-spacing:-0.05px">Invert Call Tree</div>
<div class="abs" style="left:4px;top:545px;width:10px;height:10px;border-radius:2px;border:1px solid #c0c2c8;background:#eef0f5"></div>
<div class="t" style="left:17px;top:544px;font-size:11px;color:#8c8c8c;letter-spacing:-0.05px">Hide Missing Symbols</div>
<div class="abs" style="left:4px;top:561px;width:10px;height:10px;border-radius:2px;border:1px solid #c0c2c8;background:#eef0f5"></div>
<div class="t" style="left:17px;top:560px;font-size:11px;color:#8c8c8c;letter-spacing:-0.05px">Hide System Libraries</div>
<div class="abs" style="left:4px;top:577px;width:10px;height:10px;border-radius:2px;border:1px solid #c0c2c8;background:#eef0f5"></div>
<div class="t" style="left:17px;top:576px;font-size:11px;color:#8c8c8c;letter-spacing:-0.05px">Show Obj-C Only</div>
<div class="abs" style="left:4px;top:593px;width:10px;height:10px;border-radius:2px;border:1px solid #c0c2c8;background:#eef0f5"></div>
<div class="t" style="left:17px;top:592px;font-size:11px;color:#8c8c8c;letter-spacing:-0.05px">Flatten Recursion</div>
<div class="abs" style="left:0;top:606px;width:213px;height:17px;background:linear-gradient(#e6e9f1 0,#dfe2ec 45%,#c9cddb 60%,#d3d7e3 100%);border-top:1px solid #a8a8b0;border-bottom:1px solid #a0a0a8"></div>
<svg class="abs" style="left:4px;top:611px" width="10" height="10" viewBox="0 0 10 10"><path d="M0 0 L8 4.5 L0 9 Z" fill="#777"/></svg>
<div class="t" style="left:18px;top:608px;font-size:11px;font-weight:bold;color:#111;letter-spacing:-0.1px;-webkit-text-stroke:0">Call Tree Constraints</div>
<div class="abs" style="left:0;top:623px;width:213px;height:17px;background:linear-gradient(#e6e9f1 0,#dfe2ec 45%,#c9cddb 60%,#d3d7e3 100%);border-top:1px solid #a8a8b0;border-bottom:1px solid #a0a0a8"></div>
<svg class="abs" style="left:4px;top:628px" width="10" height="10" viewBox="0 0 10 10"><path d="M0 0 L8 4.5 L0 9 Z" fill="#777"/></svg>
<div class="t" style="left:18px;top:625px;font-size:11px;font-weight:bold;color:#111;letter-spacing:-0.1px;-webkit-text-stroke:0">Specific Data Mining</div>
<div class="abs" style="left:214px;top:375px;width:1386px;height:16px;background:linear-gradient(#ffffff 0,#f7f7f7 40%,#ececec 60%,#e9e9e9 100%);border-bottom:1px solid #a3a3a3"></div>
<div class="abs" style="left:256px;top:377px;width:1px;height:11px;background:#c6c6c6"></div>
<div class="abs" style="left:389px;top:377px;width:1px;height:11px;background:#c6c6c6"></div>
<div class="abs" style="left:467px;top:377px;width:1px;height:11px;background:#c6c6c6"></div>
<div class="abs" style="left:545px;top:377px;width:1px;height:11px;background:#c6c6c6"></div>
<div class="abs" style="left:623px;top:377px;width:1px;height:11px;background:#c6c6c6"></div>
<div class="abs" style="left:716px;top:377px;width:1px;height:11px;background:#c6c6c6"></div>
<div class="abs" style="left:794px;top:377px;width:1px;height:11px;background:#c6c6c6"></div>
<div class="abs" style="left:985px;top:377px;width:1px;height:11px;background:#c6c6c6"></div>
<div class="t" style="left:216px;top:376px;font-size:11px;color:#111;letter-spacing:0.13px">Graph</div>
<div class="t" style="left:262.5px;top:376px;font-size:11px;color:#111;letter-spacing:0.36px">Category</div>
<div class="t" style="left:390px;width:64.05px;top:376px;font-size:11px;color:#111;letter-spacing:0.05px;text-align:right">Live Bytes</div>
<div class="t" style="left:468px;width:64.92px;top:376px;font-size:11px;color:#111;letter-spacing:0.42px;text-align:right"># Living</div>
<div class="t" style="left:548px;top:376px;font-size:11px;color:#111;letter-spacing:0.42px"># Transitory</div>
<div class="t" style="left:624px;width:79.47999999999996px;top:376px;font-size:11px;color:#111;letter-spacing:0.18px;text-align:right">Overall Bytes</div>
<div class="t" style="left:717px;width:64.59999999999995px;top:376px;font-size:11px;color:#111;letter-spacing:0.3px;text-align:right"># Overall</div>
<div class="t" style="left:797px;top:376px;font-size:11px;color:#111;letter-spacing:0.5px"># Allocations (Net / Overall)</div>
<svg class="abs" style="left:457px;top:380px" width="7" height="6"><path d="M0 0 L7 0 L3.5 6 Z" fill="#a9a9a9"/></svg>
<div class="abs" style="left:214px;top:391px;width:1371px;height:386px;background:#fff"></div>
<div class="abs" style="left:214px;top:391px;width:1371px;height:16px;background:#ffffff"></div><div class="abs" style="left:214px;top:407px;width:1371px;height:16px;background:#f1f5fa"></div><div class="abs" style="left:214px;top:423px;width:1371px;height:15px;background:#d4d4d4"></div><div class="abs" style="left:214px;top:439px;width:1371px;height:16px;background:#f1f5fa"></div><div class="abs" style="left:214px;top:455px;width:1371px;height:16px;background:#ffffff"></div><div class="abs" style="left:214px;top:471px;width:1371px;height:16px;background:#f1f5fa"></div><div class="abs" style="left:214px;top:487px;width:1371px;height:16px;background:#ffffff"></div><div class="abs" style="left:214px;top:503px;width:1371px;height:16px;background:#f1f5fa"></div><div class="abs" style="left:214px;top:519px;width:1371px;height:16px;background:#ffffff"></div><div class="abs" style="left:214px;top:535px;width:1371px;height:16px;background:#f1f5fa"></div><div class="abs" style="left:214px;top:551px;width:1371px;height:16px;background:#ffffff"></div><div class="abs" style="left:214px;top:567px;width:1371px;height:16px;background:#f1f5fa"></div><div class="abs" style="left:214px;top:583px;width:1371px;height:16px;background:#ffffff"></div><div class="abs" style="left:214px;top:599px;width:1371px;height:16px;background:#f1f5fa"></div><div class="abs" style="left:214px;top:615px;width:1371px;height:16px;background:#ffffff"></div><div class="abs" style="left:214px;top:631px;width:1371px;height:16px;background:#f1f5fa"></div><div class="abs" style="left:214px;top:647px;width:1371px;height:16px;background:#ffffff"></div><div class="abs" style="left:214px;top:663px;width:1371px;height:16px;background:#f1f5fa"></div><div class="abs" style="left:214px;top:679px;width:1371px;height:16px;background:#ffffff"></div><div class="abs" style="left:214px;top:695px;width:1371px;height:16px;background:#f1f5fa"></div><div class="abs" style="left:214px;top:711px;width:1371px;height:16px;background:#ffffff"></div><div class="abs" style="left:214px;top:727px;width:1371px;height:16px;background:#f1f5fa"></div><div class="abs" style="left:214px;top:743px;width:1371px;height:16px;background:#ffffff"></div><div class="abs" style="left:214px;top:759px;width:1371px;height:16px;background:#f1f5fa"></div>
<div class="abs" style="left:256px;top:391px;width:1px;height:386px;background:#dcd6dc"></div>
<div class="abs" style="left:389px;top:391px;width:1px;height:386px;background:#dcd6dc"></div>
<div class="abs" style="left:467px;top:391px;width:1px;height:386px;background:#dcd6dc"></div>
<div class="abs" style="left:545px;top:391px;width:1px;height:386px;background:#dcd6dc"></div>
<div class="abs" style="left:623px;top:391px;width:1px;height:386px;background:#dcd6dc"></div>
<div class="abs" style="left:716px;top:391px;width:1px;height:386px;background:#dcd6dc"></div>
<div class="abs" style="left:794px;top:391px;width:1px;height:386px;background:#dcd6dc"></div>
<div class="abs" style="left:985px;top:391px;width:1px;height:386px;background:#dcd6dc"></div>
<div class="abs" style="left:229px;top:394px;width:12px;height:11px;border-radius:2px;border:1px solid #8a8a8a;background:linear-gradient(#f8f8f8,#dedede)"></div><svg class="abs" style="left:229px;top:390px" width="14" height="14" viewBox="0 0 14 14"><path d="M3 7 L6 11 L12 1.5" fill="none" stroke="#111" stroke-width="2.2"/></svg><div class="t" style="left:258px;top:392px;font-size:11px;color:#3b1ef2;letter-spacing:0.38px;line-height:14px">* All Allocations *</div><div class="t" style="left:390px;width:74px;top:392px;font-size:11px;color:#3b1ef2;letter-spacing:0.38px;line-height:14px;text-align:right">2.23 MB</div><div class="t" style="left:468px;width:73px;top:392px;font-size:11px;color:#3b1ef2;letter-spacing:0.38px;line-height:14px;text-align:right">34484</div><div class="t" style="left:546px;width:74px;top:392px;font-size:11px;color:#3b1ef2;letter-spacing:0.38px;line-height:14px;text-align:right">28404</div><div class="t" style="left:624px;width:89px;top:392px;font-size:11px;color:#3b1ef2;letter-spacing:0.38px;line-height:14px;text-align:right">8.10 MB</div><div class="t" style="left:717px;width:74px;top:392px;font-size:11px;color:#3b1ef2;letter-spacing:0.38px;line-height:14px;text-align:right">62888</div><div class="t" style="left:878px;top:393px;font-size:12px;color:#3b1ef2;letter-spacing:1.4px;line-height:16px">+++</div><div class="abs" style="left:229px;top:409px;width:12px;height:12px;border-radius:2px;border:1px solid #8f8f8f;background:linear-gradient(#fdfdfd,#e9e9e9)"></div><div class="t" style="left:258px;top:408px;font-size:11px;color:#111;letter-spacing:0.38px;line-height:14px">CFString (immutable)</div><div class="t" style="left:390px;width:74px;top:408px;font-size:11px;color:#111;letter-spacing:0.38px;line-height:14px;text-align:right">279.45 KB</div><div class="t" style="left:468px;width:73px;top:408px;font-size:11px;color:#111;letter-spacing:0.38px;line-height:14px;text-align:right">6224</div><div class="t" style="left:546px;width:74px;top:408px;font-size:11px;color:#111;letter-spacing:0.38px;line-height:14px;text-align:right">0</div><div class="t" style="left:624px;width:89px;top:408px;font-size:11px;color:#111;letter-spacing:0.38px;line-height:14px;text-align:right">279.45 KB</div><div class="t" style="left:717px;width:74px;top:408px;font-size:11px;color:#111;letter-spacing:0.38px;line-height:14px;text-align:right">6224</div><div class="abs" style="left:797px;top:409px;width:103px;height:12px;background:#0000ee"></div><div class="abs" style="left:229px;top:425px;width:12px;height:12px;border-radius:2px;border:1px solid #8f8f8f;background:linear-gradient(#fdfdfd,#e9e9e9)"></div><div class="t" style="left:258px;top:424px;font-size:11px;color:#111;letter-spacing:0.38px;line-height:14px">Malloc 156.00 KB</div><div class="t" style="left:390px;width:74px;top:424px;font-size:11px;color:#111;letter-spacing:0.38px;line-height:14px;text-align:right">156.00 KB</div><div class="t" style="left:468px;width:73px;top:424px;font-size:11px;color:#111;letter-spacing:0.38px;line-height:14px;text-align:right">1</div><div class="t" style="left:546px;width:74px;top:424px;font-size:11px;color:#111;letter-spacing:0.38px;line-height:14px;text-align:right">0</div><div class="t" style="left:624px;width:89px;top:424px;font-size:11px;color:#111;letter-spacing:0.38px;line-height:14px;text-align:right">156.00 KB</div><div class="t" style="left:717px;width:74px;top:424px;font-size:11px;color:#111;letter-spacing:0.38px;line-height:14px;text-align:right">1</div><svg class="abs" style="left:359px;top:425px" width="12" height="12" viewBox="0 0 12 12"><circle cx="6" cy="6" r="6" fill="#efefef"/><path d="M2.8 6 L8 6 M5.8 3.6 L8.6 6 L5.8 8.4" stroke="#cbcbcb" stroke-width="1.6" fill="none"/></svg><div class="abs" style="left:229px;top:441px;width:12px;height:12px;border-radius:2px;border:1px solid #8f8f8f;background:linear-gradient(#fdfdfd,#e9e9e9)"></div><div class="t" style="left:258px;top:440px;font-size:11px;color:#111;letter-spacing:0.38px;line-height:14px">Malloc 62.50 KB</div><div class="t" style="left:390px;width:74px;top:440px;font-size:11px;color:#111;letter-spacing:0.38px;line-height:14px;text-align:right">125.00 KB</div><div class="t" style="left:468px;width:73px;top:440px;font-size:11px;color:#111;letter-spacing:0.38px;line-height:14px;text-align:right">2</div><div class="t" style="left:546px;width:74px;top:440px;font-size:11px;color:#111;letter-spacing:0.38px;line-height:14px;text-align:right">0</div><div class="t" style="left:624px;width:89px;top:440px;font-size:11px;color:#111;letter-spacing:0.38px;line-height:14px;text-align:right">125.00 KB</div><div class="t" style="left:717px;width:74px;top:440px;font-size:11px;color:#111;letter-spacing:0.38px;line-height:14px;text-align:right">2</div><div class="abs" style="left:229px;top:457px;width:12px;height:12px;border-radius:2px;border:1px solid #8f8f8f;background:linear-gradient(#fdfdfd,#e9e9e9)"></div><div class="t" style="left:258px;top:456px;font-size:11px;color:#111;letter-spacing:0.38px;line-height:14px">Malloc 32 Bytes</div><div class="t" style="left:390px;width:74px;top:456px;font-size:11px;color:#111;letter-spacing:0.38px;line-height:14px;text-align:right">113.81 KB</div><div class="t" style="left:468px;width:73px;top:456px;font-size:11px;color:#111;letter-spacing:0.38px;line-height:14px;text-align:right">3642</div><div class="t" style="left:546px;width:74px;top:456px;font-size:11px;color:#111;letter-spacing:0.38px;line-height:14px;text-align:right">1446</div><div class="t" style="left:624px;width:89px;top:456px;font-size:11px;color:#111;letter-spacing:0.38px;line-height:14px;text-align:right">159.00 KB</div><div class="t" style="left:717px;width:74px;top:456px;font-size:11px;color:#111;letter-spacing:0.38px;line-height:14px;text-align:right">5088</div><div class="abs" style="left:797px;top:457px;width:60px;height:12px;background:#0000ee"></div><div class="abs" style="left:857px;top:457px;width:24px;height:12px;background:#b9b9fa"></div><div class="abs" style="left:229px;top:473px;width:12px;height:12px;border-radius:2px;border:1px solid #8f8f8f;background:linear-gradient(#fdfdfd,#e9e9e9)"></div><div class="t" style="left:258px;top:472px;font-size:11px;color:#111;letter-spacing:0.38px;line-height:14px">Malloc 1.00 KB</div><div class="t" style="left:390px;width:74px;top:472px;font-size:11px;color:#111;letter-spacing:0.38px;line-height:14px;text-align:right">113.00 KB</div><div class="t" style="left:468px;width:73px;top:472px;font-size:11px;color:#111;letter-spacing:0.38px;line-height:14px;text-align:right">113</div><div class="t" style="left:546px;width:74px;top:472px;font-size:11px;color:#111;letter-spacing:0.38px;line-height:14px;text-align:right">296</div><div class="t" style="left:624px;width:89px;top:472px;font-size:11px;color:#111;letter-spacing:0.38px;line-height:14px;text-align:right">409.00 KB</div><div class="t" style="left:717px;width:74px;top:472px;font-size:11px;color:#111;letter-spacing:0.38px;line-height:14px;text-align:right">409</div><div class="abs" style="left:797px;top:473px;width:2px;height:12px;background:#f0002a"></div><div class="abs" style="left:799px;top:473px;width:5px;height:12px;background:#fab9c3"></div><div class="abs" style="left:229px;top:489px;width:12px;height:12px;border-radius:2px;border:1px solid #8f8f8f;background:linear-gradient(#fdfdfd,#e9e9e9)"></div><div class="t" style="left:258px;top:488px;font-size:11px;color:#111;letter-spacing:0.38px;line-height:14px">Malloc 16 Bytes</div><div class="t" style="left:390px;width:74px;top:488px;font-size:11px;color:#111;letter-spacing:0.38px;line-height:14px;text-align:right">106.28 KB</div><div class="t" style="left:468px;width:73px;top:488px;font-size:11px;color:#111;letter-spacing:0.38px;line-height:14px;text-align:right">6802</div><div class="t" style="left:546px;width:74px;top:488px;font-size:11px;color:#111;letter-spacing:0.38px;line-height:14px;text-align:right">3179</div><div class="t" style="left:624px;width:89px;top:488px;font-size:11px;color:#111;letter-spacing:0.38px;line-height:14px;text-align:right">155.95 KB</div><div class="t" style="left:717px;width:74px;top:488px;font-size:11px;color:#111;letter-spacing:0.38px;line-height:14px;text-align:right">9981</div><div class="abs" style="left:797px;top:489px;width:113px;height:12px;background:#0000ee"></div><div class="abs" style="left:910px;top:489px;width:52px;height:12px;background:#b9b9fa"></div><div class="abs" style="left:229px;top:505px;width:12px;height:12px;border-radius:2px;border:1px solid #8f8f8f;background:linear-gradient(#fdfdfd,#e9e9e9)"></div><div class="t" style="left:258px;top:504px;font-size:11px;color:#111;letter-spacing:0.38px;line-height:14px">Malloc 144 Bytes</div><div class="t" style="left:390px;width:74px;top:504px;font-size:11px;color:#111;letter-spacing:0.38px;line-height:14px;text-align:right">92.39 KB</div><div class="t" style="left:468px;width:73px;top:504px;font-size:11px;color:#111;letter-spacing:0.38px;line-height:14px;text-align:right">657</div><div class="t" style="left:546px;width:74px;top:504px;font-size:11px;color:#111;letter-spacing:0.38px;line-height:14px;text-align:right">107</div><div class="t" style="left:624px;width:89px;top:504px;font-size:11px;color:#111;letter-spacing:0.38px;line-height:14px;text-align:right">107.44 KB</div><div class="t" style="left:717px;width:74px;top:504px;font-size:11px;color:#111;letter-spacing:0.38px;line-height:14px;text-align:right">764</div><div class="abs" style="left:797px;top:505px;width:11px;height:12px;background:#ee00e8"></div><div class="abs" style="left:808px;top:505px;width:2px;height:12px;background:#fab9f0"></div><div class="abs" style="left:229px;top:521px;width:12px;height:12px;border-radius:2px;border:1px solid #8f8f8f;background:linear-gradient(#fdfdfd,#e9e9e9)"></div><div class="t" style="left:258px;top:520px;font-size:11px;color:#111;letter-spacing:0.38px;line-height:14px">CFString (store)</div><div class="t" style="left:390px;width:74px;top:520px;font-size:11px;color:#111;letter-spacing:0.38px;line-height:14px;text-align:right">72.06 KB</div><div class="t" style="left:468px;width:73px;top:520px;font-size:11px;color:#111;letter-spacing:0.38px;line-height:14px;text-align:right">528</div><div class="t" style="left:546px;width:74px;top:520px;font-size:11px;color:#111;letter-spacing:0.38px;line-height:14px;text-align:right">1063</div><div class="t" style="left:624px;width:89px;top:520px;font-size:11px;color:#111;letter-spacing:0.38px;line-height:14px;text-align:right">247.59 KB</div><div class="t" style="left:717px;width:74px;top:520px;font-size:11px;color:#111;letter-spacing:0.38px;line-height:14px;text-align:right">1591</div><div class="abs" style="left:797px;top:521px;width:9px;height:12px;background:#f000be"></div><div class="abs" style="left:806px;top:521px;width:17px;height:12px;background:#fab9eb"></div><div class="abs" style="left:229px;top:537px;width:12px;height:12px;border-radius:2px;border:1px solid #8f8f8f;background:linear-gradient(#fdfdfd,#e9e9e9)"></div><div class="t" style="left:258px;top:536px;font-size:11px;color:#111;letter-spacing:0.38px;line-height:14px">UITextRenderingAttri...</div><div class="t" style="left:390px;width:74px;top:536px;font-size:11px;color:#111;letter-spacing:0.38px;line-height:14px;text-align:right">56.17 KB</div><div class="t" style="left:468px;width:73px;top:536px;font-size:11px;color:#111;letter-spacing:0.38px;line-height:14px;text-align:right">719</div><div class="t" style="left:546px;width:74px;top:536px;font-size:11px;color:#111;letter-spacing:0.38px;line-height:14px;text-align:right">0</div><div class="t" style="left:624px;width:89px;top:536px;font-size:11px;color:#111;letter-spacing:0.38px;line-height:14px;text-align:right">56.17 KB</div><div class="t" style="left:717px;width:74px;top:536px;font-size:11px;color:#111;letter-spacing:0.38px;line-height:14px;text-align:right">719</div><div class="abs" style="left:797px;top:537px;width:12px;height:12px;background:#ee00e8"></div><div class="abs" style="left:229px;top:553px;width:12px;height:12px;border-radius:2px;border:1px solid #8f8f8f;background:linear-gradient(#fdfdfd,#e9e9e9)"></div><div class="t" style="left:258px;top:552px;font-size:11px;color:#111;letter-spacing:0.38px;line-height:14px">Malloc 304 Bytes</div><div class="t" style="left:390px;width:74px;top:552px;font-size:11px;color:#111;letter-spacing:0.38px;line-height:14px;text-align:right">50.47 KB</div><div class="t" style="left:468px;width:73px;top:552px;font-size:11px;color:#111;letter-spacing:0.38px;line-height:14px;text-align:right">170</div><div class="t" style="left:546px;width:74px;top:552px;font-size:11px;color:#111;letter-spacing:0.38px;line-height:14px;text-align:right">414</div><div class="t" style="left:624px;width:89px;top:552px;font-size:11px;color:#111;letter-spacing:0.38px;line-height:14px;text-align:right">173.38 KB</div><div class="t" style="left:717px;width:74px;top:552px;font-size:11px;color:#111;letter-spacing:0.38px;line-height:14px;text-align:right">584</div><div class="abs" style="left:797px;top:553px;width:3px;height:12px;background:#f0003c"></div><div class="abs" style="left:800px;top:553px;width:7px;height:12px;background:#fab9c8"></div><div class="abs" style="left:229px;top:569px;width:12px;height:12px;border-radius:2px;border:1px solid #8f8f8f;background:linear-gradient(#fdfdfd,#e9e9e9)"></div><div class="t" style="left:258px;top:568px;font-size:11px;color:#111;letter-spacing:0.38px;line-height:14px">Malloc 4.00 KB</div><div class="t" style="left:390px;width:74px;top:568px;font-size:11px;color:#111;letter-spacing:0.38px;line-height:14px;text-align:right">48.00 KB</div><div class="t" style="left:468px;width:73px;top:568px;font-size:11px;color:#111;letter-spacing:0.38px;line-height:14px;text-align:right">12</div><div class="t" style="left:546px;width:74px;top:568px;font-size:11px;color:#111;letter-spacing:0.38px;line-height:14px;text-align:right">241</div><div class="t" style="left:624px;width:89px;top:568px;font-size:11px;color:#111;letter-spacing:0.38px;line-height:14px;text-align:right">1,012.00 KB</div><div class="t" style="left:717px;width:74px;top:568px;font-size:11px;color:#111;letter-spacing:0.38px;line-height:14px;text-align:right">253</div><div class="abs" style="left:797px;top:569px;width:4px;height:12px;background:#fab9be"></div><div class="abs" style="left:229px;top:585px;width:12px;height:12px;border-radius:2px;border:1px solid #8f8f8f;background:linear-gradient(#fdfdfd,#e9e9e9)"></div><div class="t" style="left:258px;top:584px;font-size:11px;color:#111;letter-spacing:0.38px;line-height:14px">CGColorTransform</div><div class="t" style="left:390px;width:74px;top:584px;font-size:11px;color:#111;letter-spacing:0.38px;line-height:14px;text-align:right">42.00 KB</div><div class="t" style="left:468px;width:73px;top:584px;font-size:11px;color:#111;letter-spacing:0.38px;line-height:14px;text-align:right">128</div><div class="t" style="left:546px;width:74px;top:584px;font-size:11px;color:#111;letter-spacing:0.38px;line-height:14px;text-align:right">0</div><div class="t" style="left:624px;width:89px;top:584px;font-size:11px;color:#111;letter-spacing:0.38px;line-height:14px;text-align:right">42.00 KB</div><div class="t" style="left:717px;width:74px;top:584px;font-size:11px;color:#111;letter-spacing:0.38px;line-height:14px;text-align:right">128</div><div class="abs" style="left:797px;top:585px;width:2px;height:12px;background:#f00030"></div><div class="abs" style="left:229px;top:601px;width:12px;height:12px;border-radius:2px;border:1px solid #8f8f8f;background:linear-gradient(#fdfdfd,#e9e9e9)"></div><div class="t" style="left:258px;top:600px;font-size:11px;color:#111;letter-spacing:0.38px;line-height:14px">Malloc 8.00 KB</div><div class="t" style="left:390px;width:74px;top:600px;font-size:11px;color:#111;letter-spacing:0.38px;line-height:14px;text-align:right">40.00 KB</div><div class="t" style="left:468px;width:73px;top:600px;font-size:11px;color:#111;letter-spacing:0.38px;line-height:14px;text-align:right">5</div><div class="t" style="left:546px;width:74px;top:600px;font-size:11px;color:#111;letter-spacing:0.38px;line-height:14px;text-align:right">0</div><div class="t" style="left:624px;width:89px;top:600px;font-size:11px;color:#111;letter-spacing:0.38px;line-height:14px;text-align:right">40.00 KB</div><div class="t" style="left:717px;width:74px;top:600px;font-size:11px;color:#111;letter-spacing:0.38px;line-height:14px;text-align:right">5</div><div class="abs" style="left:229px;top:617px;width:12px;height:12px;border-radius:2px;border:1px solid #8f8f8f;background:linear-gradient(#fdfdfd,#e9e9e9)"></div><div class="t" style="left:258px;top:616px;font-size:11px;color:#111;letter-spacing:0.38px;line-height:14px">CFString (mutable)</div><div class="t" style="left:390px;width:74px;top:616px;font-size:11px;color:#111;letter-spacing:0.38px;line-height:14px;text-align:right">35.56 KB</div><div class="t" style="left:468px;width:73px;top:616px;font-size:11px;color:#111;letter-spacing:0.38px;line-height:14px;text-align:right">1138</div><div class="t" style="left:546px;width:74px;top:616px;font-size:11px;color:#111;letter-spacing:0.38px;line-height:14px;text-align:right">0</div><div class="t" style="left:624px;width:89px;top:616px;font-size:11px;color:#111;letter-spacing:0.38px;line-height:14px;text-align:right">35.56 KB</div><div class="t" style="left:717px;width:74px;top:616px;font-size:11px;color:#111;letter-spacing:0.38px;line-height:14px;text-align:right">1138</div><div class="abs" style="left:797px;top:617px;width:19px;height:12px;background:#5000ee"></div><div class="abs" style="left:229px;top:633px;width:12px;height:12px;border-radius:2px;border:1px solid #8f8f8f;background:linear-gradient(#fdfdfd,#e9e9e9)"></div><div class="t" style="left:258px;top:632px;font-size:11px;color:#111;letter-spacing:0.38px;line-height:14px">CFBasicHash (value-st...</div><div class="t" style="left:390px;width:74px;top:632px;font-size:11px;color:#111;letter-spacing:0.38px;line-height:14px;text-align:right">31.70 KB</div><div class="t" style="left:468px;width:73px;top:632px;font-size:11px;color:#111;letter-spacing:0.38px;line-height:14px;text-align:right">341</div><div class="t" style="left:546px;width:74px;top:632px;font-size:11px;color:#111;letter-spacing:0.38px;line-height:14px;text-align:right">815</div><div class="t" style="left:624px;width:89px;top:632px;font-size:11px;color:#111;letter-spacing:0.38px;line-height:14px;text-align:right">86.41 KB</div><div class="t" style="left:717px;width:74px;top:632px;font-size:11px;color:#111;letter-spacing:0.38px;line-height:14px;text-align:right">1156</div><div class="abs" style="left:797px;top:633px;width:5px;height:12px;background:#f00064"></div><div class="abs" style="left:802px;top:633px;width:14px;height:12px;background:#fab9d2"></div><div class="abs" style="left:229px;top:649px;width:12px;height:12px;border-radius:2px;border:1px solid #8f8f8f;background:linear-gradient(#fdfdfd,#e9e9e9)"></div><div class="t" style="left:258px;top:648px;font-size:11px;color:#111;letter-spacing:0.38px;line-height:14px">Malloc 48 Bytes</div><div class="t" style="left:390px;width:74px;top:648px;font-size:11px;color:#111;letter-spacing:0.38px;line-height:14px;text-align:right">29.39 KB</div><div class="t" style="left:468px;width:73px;top:648px;font-size:11px;color:#111;letter-spacing:0.38px;line-height:14px;text-align:right">627</div><div class="t" style="left:546px;width:74px;top:648px;font-size:11px;color:#111;letter-spacing:0.38px;line-height:14px;text-align:right">461</div><div class="t" style="left:624px;width:89px;top:648px;font-size:11px;color:#111;letter-spacing:0.38px;line-height:14px;text-align:right">51.00 KB</div><div class="t" style="left:717px;width:74px;top:648px;font-size:11px;color:#111;letter-spacing:0.38px;line-height:14px;text-align:right">1088</div><div class="abs" style="left:797px;top:649px;width:10px;height:12px;background:#ee00e0"></div><div class="abs" style="left:807px;top:649px;width:8px;height:12px;background:#fab9f5"></div><div class="abs" style="left:229px;top:665px;width:12px;height:12px;border-radius:2px;border:1px solid #8f8f8f;background:linear-gradient(#fdfdfd,#e9e9e9)"></div><div class="t" style="left:258px;top:664px;font-size:11px;color:#111;letter-spacing:0.38px;line-height:14px">CFBasicHash (key-store)</div><div class="t" style="left:390px;width:74px;top:664px;font-size:11px;color:#111;letter-spacing:0.38px;line-height:14px;text-align:right">29.33 KB</div><div class="t" style="left:468px;width:73px;top:664px;font-size:11px;color:#111;letter-spacing:0.38px;line-height:14px;text-align:right">283</div><div class="t" style="left:546px;width:74px;top:664px;font-size:11px;color:#111;letter-spacing:0.38px;line-height:14px;text-align:right">634</div><div class="t" style="left:624px;width:89px;top:664px;font-size:11px;color:#111;letter-spacing:0.38px;line-height:14px;text-align:right">79.16 KB</div><div class="t" style="left:717px;width:74px;top:664px;font-size:11px;color:#111;letter-spacing:0.38px;line-height:14px;text-align:right">917</div><div class="abs" style="left:797px;top:665px;width:4px;height:12px;background:#f00060"></div><div class="abs" style="left:801px;top:665px;width:11px;height:12px;background:#fab9d0"></div><div class="abs" style="left:229px;top:681px;width:12px;height:12px;border-radius:2px;border:1px solid #8f8f8f;background:linear-gradient(#fdfdfd,#e9e9e9)"></div><div class="t" style="left:258px;top:680px;font-size:11px;color:#111;letter-spacing:0.38px;line-height:14px">CALayer</div><div class="t" style="left:390px;width:74px;top:680px;font-size:11px;color:#111;letter-spacing:0.38px;line-height:14px;text-align:right">28.08 KB</div><div class="t" style="left:468px;width:73px;top:680px;font-size:11px;color:#111;letter-spacing:0.38px;line-height:14px;text-align:right">599</div><div class="t" style="left:546px;width:74px;top:680px;font-size:11px;color:#111;letter-spacing:0.38px;line-height:14px;text-align:right">0</div><div class="t" style="left:624px;width:89px;top:680px;font-size:11px;color:#111;letter-spacing:0.38px;line-height:14px;text-align:right">28.08 KB</div><div class="t" style="left:717px;width:74px;top:680px;font-size:11px;color:#111;letter-spacing:0.38px;line-height:14px;text-align:right">599</div><div class="abs" style="left:797px;top:681px;width:10px;height:12px;background:#f000d8"></div><div class="abs" style="left:229px;top:697px;width:12px;height:12px;border-radius:2px;border:1px solid #8f8f8f;background:linear-gradient(#fdfdfd,#e9e9e9)"></div><div class="t" style="left:258px;top:696px;font-size:11px;color:#111;letter-spacing:0.38px;line-height:14px">__NSArrayM</div><div class="t" style="left:390px;width:74px;top:696px;font-size:11px;color:#111;letter-spacing:0.38px;line-height:14px;text-align:right">27.06 KB</div><div class="t" style="left:468px;width:73px;top:696px;font-size:11px;color:#111;letter-spacing:0.38px;line-height:14px;text-align:right">866</div><div class="t" style="left:546px;width:74px;top:696px;font-size:11px;color:#111;letter-spacing:0.38px;line-height:14px;text-align:right">0</div><div class="t" style="left:624px;width:89px;top:696px;font-size:11px;color:#111;letter-spacing:0.38px;line-height:14px;text-align:right">27.06 KB</div><div class="t" style="left:717px;width:74px;top:696px;font-size:11px;color:#111;letter-spacing:0.38px;line-height:14px;text-align:right">866</div><div class="abs" style="left:797px;top:697px;width:14px;height:12px;background:#aa00e8"></div><div class="abs" style="left:229px;top:713px;width:12px;height:12px;border-radius:2px;border:1px solid #8f8f8f;background:linear-gradient(#fdfdfd,#e9e9e9)"></div><div class="t" style="left:258px;top:712px;font-size:11px;color:#111;letter-spacing:0.38px;line-height:14px">Malloc 3.00 KB</div><div class="t" style="left:390px;width:74px;top:712px;font-size:11px;color:#111;letter-spacing:0.38px;line-height:14px;text-align:right">27.00 KB</div><div class="t" style="left:468px;width:73px;top:712px;font-size:11px;color:#111;letter-spacing:0.38px;line-height:14px;text-align:right">9</div><div class="t" style="left:546px;width:74px;top:712px;font-size:11px;color:#111;letter-spacing:0.38px;line-height:14px;text-align:right">69</div><div class="t" style="left:624px;width:89px;top:712px;font-size:11px;color:#111;letter-spacing:0.38px;line-height:14px;text-align:right">234.00 KB</div><div class="t" style="left:717px;width:74px;top:712px;font-size:11px;color:#111;letter-spacing:0.38px;line-height:14px;text-align:right">78</div><div class="abs" style="left:797px;top:713px;width:1px;height:12px;background:#fab9c3"></div><div class="abs" style="left:229px;top:729px;width:12px;height:12px;border-radius:2px;border:1px solid #8f8f8f;background:linear-gradient(#fdfdfd,#e9e9e9)"></div><div class="t" style="left:258px;top:728px;font-size:11px;color:#111;letter-spacing:0.38px;line-height:14px">CFDictionary (mutable)</div><div class="t" style="left:390px;width:74px;top:728px;font-size:11px;color:#111;letter-spacing:0.38px;line-height:14px;text-align:right">26.72 KB</div><div class="t" style="left:468px;width:73px;top:728px;font-size:11px;color:#111;letter-spacing:0.38px;line-height:14px;text-align:right">570</div><div class="t" style="left:546px;width:74px;top:728px;font-size:11px;color:#111;letter-spacing:0.38px;line-height:14px;text-align:right">0</div><div class="t" style="left:624px;width:89px;top:728px;font-size:11px;color:#111;letter-spacing:0.38px;line-height:14px;text-align:right">26.72 KB</div><div class="t" style="left:717px;width:74px;top:728px;font-size:11px;color:#111;letter-spacing:0.38px;line-height:14px;text-align:right">570</div><div class="abs" style="left:797px;top:729px;width:10px;height:12px;background:#f000d0"></div><div class="abs" style="left:229px;top:745px;width:12px;height:12px;border-radius:2px;border:1px solid #8f8f8f;background:linear-gradient(#fdfdfd,#e9e9e9)"></div><div class="t" style="left:258px;top:744px;font-size:11px;color:#111;letter-spacing:0.38px;line-height:14px">__NSArrayI</div><div class="t" style="left:390px;width:74px;top:744px;font-size:11px;color:#111;letter-spacing:0.38px;line-height:14px;text-align:right">20.78 KB</div><div class="t" style="left:468px;width:73px;top:744px;font-size:11px;color:#111;letter-spacing:0.38px;line-height:14px;text-align:right">941</div><div class="t" style="left:546px;width:74px;top:744px;font-size:11px;color:#111;letter-spacing:0.38px;line-height:14px;text-align:right">0</div><div class="t" style="left:624px;width:89px;top:744px;font-size:11px;color:#111;letter-spacing:0.38px;line-height:14px;text-align:right">20.78 KB</div><div class="t" style="left:717px;width:74px;top:744px;font-size:11px;color:#111;letter-spacing:0.38px;line-height:14px;text-align:right">941</div><div class="abs" style="left:797px;top:745px;width:16px;height:12px;background:#9600e8"></div><div class="abs" style="left:229px;top:761px;width:12px;height:12px;border-radius:2px;border:1px solid #8f8f8f;background:linear-gradient(#fdfdfd,#e9e9e9)"></div><div class="t" style="left:258px;top:760px;font-size:11px;color:#111;letter-spacing:0.38px;line-height:14px">CABackingStore</div><div class="t" style="left:390px;width:74px;top:760px;font-size:11px;color:#111;letter-spacing:0.38px;line-height:14px;text-align:right">20.56 KB</div><div class="t" style="left:468px;width:73px;top:760px;font-size:11px;color:#111;letter-spacing:0.38px;line-height:14px;text-align:right">94</div><div class="t" style="left:546px;width:74px;top:760px;font-size:11px;color:#111;letter-spacing:0.38px;line-height:14px;text-align:right">0</div><div class="t" style="left:624px;width:89px;top:760px;font-size:11px;color:#111;letter-spacing:0.38px;line-height:14px;text-align:right">20.56 KB</div><div class="t" style="left:717px;width:74px;top:760px;font-size:11px;color:#111;letter-spacing:0.38px;line-height:14px;text-align:right">94</div><div class="abs" style="left:797px;top:761px;width:2px;height:12px;background:#f00030"></div>
<div class="abs" style="left:1585px;top:391px;width:15px;height:386px;background:linear-gradient(90deg,#ececec,#f8f8f8 40%,#f4f4f4);border-left:1px solid #dcdcdc"></div>
<div class="abs" style="left:1589px;top:394px;width:8px;height:26px;border-radius:4px;background:#bdbdbd"></div>
<div class="abs" style="left:214px;top:777px;width:1371px;height:13px;background:linear-gradient(#ececec,#f8f8f8 50%,#f4f4f4);border-top:1px solid #dcdcdc"></div>
<div class="abs" style="left:218px;top:780px;width:1284px;height:8px;border-radius:4px;background:#bfbfbf"></div>
<div class="abs" style="left:1585px;top:777px;width:15px;height:13px;background:#ffffff"></div>
</div></body></html>
